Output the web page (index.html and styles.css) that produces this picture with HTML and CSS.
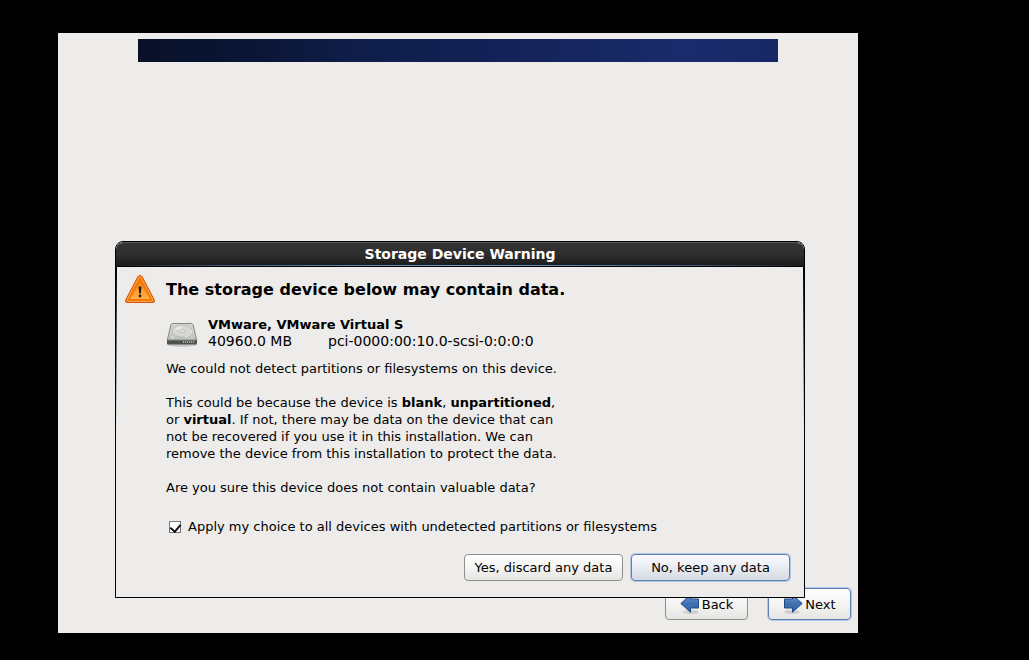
FILE: index.html
```html
<!DOCTYPE html>
<html lang="en">
<head>
	<meta charset="UTF-8">
	<meta name="viewport" content="width=device-width,initial-scale=1.0">
	<title>Storage Device Warning</title>
	<link rel="stylesheet" href="styles.css">
</head>
<body>
	<div class="screen">
		<div class="banner"></div>
		<!-- wizard buttons -->
		<div class="footer">
			<button type="button" class="btn btn-nav">
				<svg width="20" height="20" viewBox="0 0 20 20" aria-hidden="true">
					<defs>
						<linearGradient id="blue" x1="0" y1="0" x2="0" y2="1">
							<stop offset="0" stop-color="#6d98cf"/>
							<stop offset="0.5" stop-color="#3f70b0"/>
							<stop offset="1" stop-color="#3465a4"/>
						</linearGradient>
					</defs>
					<ellipse cx="11" cy="18" rx="8" ry="2" fill="#000" opacity="0.12"/>
					<path d="M0.8 9.5 L10.5 0.8 V5 H18.5 V14 H10.5 V18.2 Z" fill="url(#blue)" stroke="#204a87" stroke-linejoin="round"/>
				</svg>
				<span>Back</span>
			</button>
			<button type="button" class="btn btn-nav btn-default">
				<svg width="20" height="20" viewBox="0 0 20 20" aria-hidden="true">
					<ellipse cx="9" cy="18" rx="8" ry="2" fill="#000" opacity="0.12"/>
					<path d="M19.2 9.5 L9.5 0.8 V5 H1.5 V14 H9.5 V18.2 Z" fill="url(#blue)" stroke="#204a87" stroke-linejoin="round"/>
				</svg>
				<span>Next</span>
			</button>
		</div>
		<!-- warning dialog -->
		<div class="dialog" role="dialog" aria-labelledby="dialogTitle">
			<div class="titlebar" id="dialogTitle">Storage Device Warning</div>
			<div class="dialog-body">
				<svg class="warning-icon" width="32" height="32" viewBox="0 0 32 32" aria-hidden="true">
					<defs>
						<linearGradient id="amber" x1="0" y1="0" x2="0" y2="1">
							<stop offset="0" stop-color="#f98a1c"/>
							<stop offset="1" stop-color="#fcb04a"/>
						</linearGradient>
					</defs>
					<path d="M16 2.5 Q17.5 2.5 18.3 4 L30.3 27 Q31.3 29.5 29 29.5 H3 Q0.7 29.5 1.7 27 L13.7 4 Q14.5 2.5 16 2.5 Z" fill="#f57900" stroke="#d2560a"/>
					<path d="M16 3.8 Q16.8 3.8 17.4 5 L29.2 27.4 Q29.4 28.4 28.5 28.4 H3.5 Q2.6 28.4 2.8 27.4 L14.6 5 Q15.2 3.8 16 3.8 Z" fill="none" stroke="#fba352"/>
					<path d="M16 9 L26 26 H6 Z" fill="url(#amber)"/>
					<path d="M14.6 13.5 H17.4 L16.8 20.5 H15.2 Z" fill="#1a1a1a"/>
					<circle cx="16" cy="23" r="1.4" fill="#1a1a1a"/>
				</svg>
				<div class="message">
					<h1>The storage device below may contain data.</h1>
					<div class="device">
						<svg width="32" height="34" viewBox="0 0 32 34" aria-hidden="true">
							<defs>
								<linearGradient id="metal" x1="0" y1="0" x2="0" y2="1">
									<stop offset="0" stop-color="#d3d7cf"/>
									<stop offset="1" stop-color="#bfc2bb"/>
								</linearGradient>
							</defs>
							<ellipse cx="16" cy="28" rx="15.5" ry="3" fill="#000" opacity="0.15"/>
							<path d="M1 22.5 H31 V27 Q31 28.5 29.5 28.5 H2.5 Q1 28.5 1 27 Z" fill="#4d524f"/>
							<path d="M1.3 24 L5 8.5 Q5.4 7.5 6.8 7.5 H25.2 Q26.6 7.5 27 8.5 L30.7 24 Z" fill="url(#metal)" stroke="#888b85"/>
							<ellipse cx="16" cy="15" rx="10" ry="6" fill="#d6d9d3" stroke="#bcc0b8"/>
							<path d="M9 13.5 Q11 10 16 9.5 L16 14 Z" fill="#e6e8e4"/>
							<ellipse cx="16" cy="15" rx="3" ry="1.5" fill="#e8e9e6" stroke="#bcc0b8"/>
							<path d="M5 20 Q6 22 8 22 M19 21 Q26 19 26 14" fill="none" stroke="#eeeeec"/>
							<path d="M17 26 H28" stroke="#a5aaa5" stroke-width="2" stroke-dasharray="1 1"/>
						</svg>
						<div>
							<strong>VMware, VMware Virtual S</strong>
							<div class="device-info">
								<span>40960.0 MB</span>
								<span>pci-0000:00:10.0-scsi-0:0:0:0</span>
							</div>
						</div>
					</div>
					<p>We could not detect partitions or filesystems on this device.</p>
					<p>This could be because the device is <b>blank</b>, <b>unpartitioned</b>,<br>
					or <b>virtual</b>. If not, there may be data on the device that can<br>
					not be recovered if you use it in this installation. We can<br>
					remove the device from this installation to protect the data.</p>
					<p>Are you sure this device does not contain valuable data?</p>
					<div class="check">
						<input type="checkbox" id="applyAll" checked>
						<label for="applyAll">Apply my choice to all devices with undetected partitions or filesystems</label>
					</div>
				</div>
			</div>
			<div class="actions">
				<button type="button" class="btn">Yes, discard any data</button>
				<button type="button" class="btn btn-default btn-focus">No, keep any data</button>
			</div>
		</div>
	</div>
</body>
</html>
```
FILE: styles.css
```css
*{
	margin: 0;
	padding: 0;
	box-sizing: border-box;
}
body{
	padding: 33px 58px 27px;
	background: #000;
	color: #000;
	font: normal 13px/17px "DejaVu Sans", sans-serif;
}
.screen{
	position: relative;
	display: flex;
	flex-direction: column;
	max-width: 800px;
	min-height: calc(100vh - 60px);
	padding: 6px 7px 13px;
	background: #edeceb;
}
.banner{
	height: 23px;
	margin: 0 73px;
	background: linear-gradient(90deg, #091129 0%, #0b1638 20%, #0f1d4a 35%, #162660 70%, #182b6b 85%, #172866 100%);
}
.footer{
	display: flex;
	justify-content: flex-end;
	gap: 20px;
	margin-top: auto;
}
/* buttons */
.btn{
	min-width: 159px;
	height: 27px;
	border: 1px solid #8f8f8e;
	border-radius: 4px;
	background: linear-gradient(#fff, #f4f4f3 50%, #e6e5e4);
	color: #000;
	font: inherit;
}
.btn-default{
	border-color: #5b80b2;
	box-shadow: 0 0 0 1px #b4c8e2;
}
.btn-focus{
	background: linear-gradient(#fafbfe, #e8ecf3 50%, #d5dae1);
}
.btn-nav{
	display: flex;
	align-items: center;
	justify-content: center;
	gap: 2px;
	min-width: 83px;
	height: 32px;
}
/* dialog window */
.dialog{
	position: absolute;
	top: 208px;
	left: 57px;
	right: 53px;
	border: 1px solid #000;
	border-radius: 8px 8px 0 0;
	background: #edeceb;
}
.titlebar{
	height: 25px;
	border-top: 1px solid #555753;
	border-bottom: 1px solid #000;
	border-radius: 7px 7px 0 0;
	background: linear-gradient(90deg, #1c1c1c, #4a6894 20%, #729fcf 50%, #4a6894 80%, #1c1c1c) bottom / 100% 1px no-repeat, linear-gradient(#333, #2e2e2e 50%, #1a1a1a);
	background-clip: padding-box;
	background-origin: padding-box;
	color: #fff;
	font-size: 14px;
	font-weight: bold;
	line-height: 22px;
	text-align: center;
}
.dialog-body{
	display: flex;
	gap: 10px;
	padding: 6px 8px 0;
	/* side edges fade out downwards */
	background: linear-gradient(#000, transparent) left top / 1px 160px no-repeat, linear-gradient(#000, transparent) right top / 1px 160px no-repeat;
}
.warning-icon{
	flex: none;
}
.message{
	flex: 1;
}
.message h1{
	margin: 7px 0 16px;
	font-size: 16px;
	line-height: 20px;
}
.message p{
	margin-bottom: 17px;
}
.device{
	display: flex;
	gap: 10px;
	margin-bottom: 10px;
}
.device-info{
	display: flex;
	gap: 36px;
	font-size: 14px;
}
.check{
	display: flex;
	align-items: center;
	gap: 7px;
	margin-top: 22px;
	padding-left: 3px;
}
.check input{
	appearance: none;
	display: flex;
	justify-content: center;
	width: 12px;
	height: 12px;
	border: 1px solid #777;
	background: #fff;
}
.check input:checked::after{
	content: "";
	width: 5px;
	height: 8px;
	border: solid #111;
	border-width: 0 2px 2px 0;
	transform: rotate(40deg);
}
.actions{
	display: flex;
	justify-content: flex-end;
	gap: 8px;
	padding: 19px 14px 16px;
}
```
